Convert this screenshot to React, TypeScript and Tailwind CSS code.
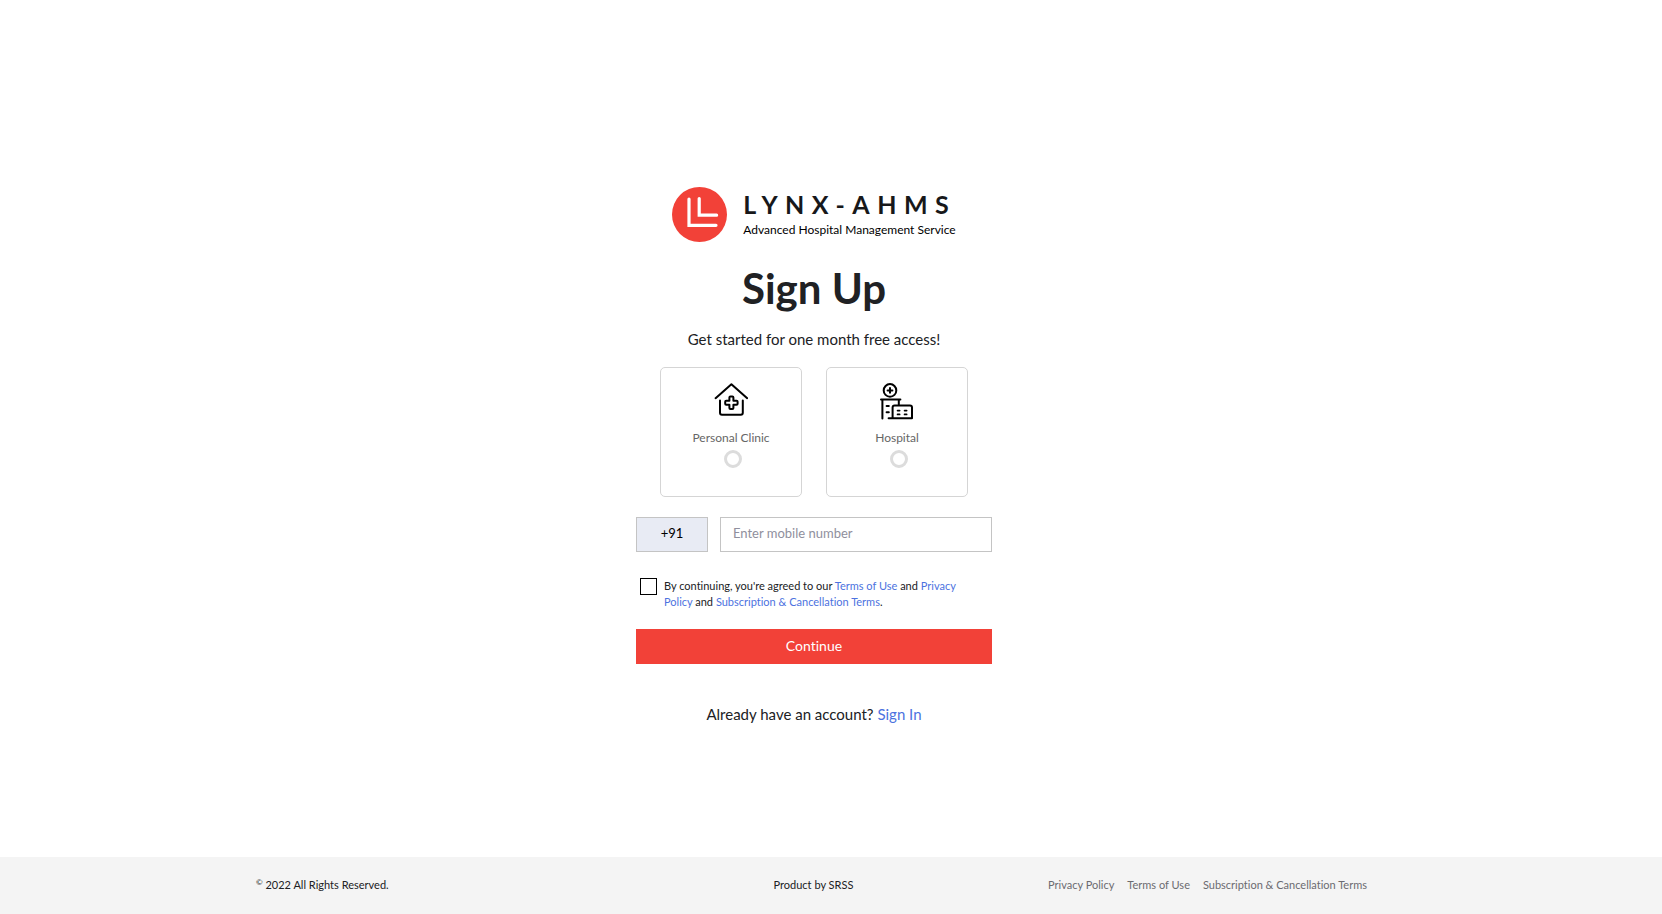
import { useState } from "react";
import type { ReactNode } from "react";

interface AccountTypeCardProps {
  value: string;
  label: string;
  selected: boolean;
  onSelect: (value: string) => void;
  children: ReactNode;
}

function Logo() {
  return (
    <div className="flex items-center gap-4">
      <svg className="w-[55px] h-[55px]" viewBox="0 0 55 55" fill="none" aria-hidden="true">
        <circle cx="27.5" cy="27.5" r="27.5" fill="#f24138" />
        <g stroke="#fff" strokeWidth="3.2" strokeLinecap="round" strokeLinejoin="miter">
          <path d="M17 12v26.3h27" />
          <path d="M27.2 11.6v16.6h17.4" />
        </g>
      </svg>
      <div className="flex flex-col pb-0.5">
        <span className="text-[25px] leading-8 font-bold tracking-[0.3em] -mr-2 text-[#17181a]">LYNX-AHMS</span>
        <span className="text-xs leading-5 text-black">Advanced Hospital Management Service</span>
      </div>
    </div>
  );
}

function ClinicIcon() {
  return (
    <svg
      className="w-[34px] h-[38px]"
      viewBox="0 0 34 38"
      fill="none"
      stroke="#000"
      strokeWidth="2"
      strokeLinecap="round"
      strokeLinejoin="round"
      aria-hidden="true"
    >
      <path d="M1.6 15.2 17.4 1.2l15.8 14" />
      <path d="M6 17.6v12.2a2 2 0 0 0 2 2h18.8a2 2 0 0 0 2-2V17.6" />
      <path d="M16.4 13.6h2a1 1 0 0 1 1 1v3.2h3.2a1 1 0 0 1 1 1v2a1 1 0 0 1-1 1h-3.2v3.2a1 1 0 0 1-1 1h-2a1 1 0 0 1-1-1v-3.2h-3.2a1 1 0 0 1-1-1v-2a1 1 0 0 1 1-1h3.2v-3.2a1 1 0 0 1 1-1z" />
    </svg>
  );
}

function HospitalIcon() {
  return (
    <svg
      className="w-[34px] h-[38px]"
      viewBox="0 0 34 38"
      fill="none"
      stroke="#000"
      strokeWidth="2"
      strokeLinecap="round"
      strokeLinejoin="round"
      aria-hidden="true"
    >
      <circle cx="10" cy="7.4" r="6.3" />
      <path d="M10 5v4.8M7.6 7.4h4.8" />
      <path d="M1 16.6h19.4M2.4 17v18.6M18.8 17v4.6" />
      <path d="M6.6 22.9h2.2M6.6 29.2h2.2" />
      <path d="M12.6 35V24.6a2 2 0 0 1 2-2H30a2 2 0 0 1 2 2v10.6H8.6" />
      <path d="M17.6 27.6h2M24.6 27.6h2M17.6 31.4h2M24.6 31.4h2" strokeWidth="1.8" />
    </svg>
  );
}

function AccountTypeCard({ value, label, selected, onSelect, children }: AccountTypeCardProps) {
  return (
    <label className="flex w-[142px] h-[130px] flex-col items-center rounded-[5px] border border-[#d5d5d5] pt-[15px] cursor-pointer">
      {children}
      <span className="mt-2 text-xs leading-[18px] text-[#666]">{label}</span>
      <input
        type="radio"
        name="accountType"
        value={value}
        checked={selected}
        onChange={() => onSelect(value)}
        className="ml-1 mt-[3px] size-[18px] appearance-none rounded-full border-3 border-[#dcdcdc] bg-white checked:border-[#f24138]"
      />
    </label>
  );
}

export default function App() {
  const [accountType, setAccountType] = useState("");
  const [mobile, setMobile] = useState("");
  const [agreed, setAgreed] = useState(false);

  return (
    <div className="flex min-h-screen flex-col bg-white font-[Lato,sans-serif] text-[#202124] [font-variant-ligatures:none]">
      <main className="flex flex-1 flex-col items-center pt-[187px] pr-[34px]">
        <Logo />

        <h1 className="mt-5 text-[42px] leading-[52px] font-bold">Sign Up</h1>
        <p className="mt-[15px] text-[15px] leading-5">Get started for one month free access!</p>

        <form className="mt-[18px] w-[356px] max-w-full" onSubmit={(e) => e.preventDefault()}>
          {/* Account type */}
          <div className="flex justify-center gap-6">
            <AccountTypeCard
              value="clinic"
              label="Personal Clinic"
              selected={accountType === "clinic"}
              onSelect={setAccountType}
            >
              <ClinicIcon />
            </AccountTypeCard>
            <AccountTypeCard
              value="hospital"
              label="Hospital"
              selected={accountType === "hospital"}
              onSelect={setAccountType}
            >
              <HospitalIcon />
            </AccountTypeCard>
          </div>

          {/* Mobile number */}
          <div className="mt-5 flex gap-3">
            <input
              type="text"
              aria-label="Country code"
              value="+91"
              readOnly
              className="h-[35px] w-[72px] border border-[#c4c4c4] bg-[#e8ebf4] pb-1 text-center text-[13px] text-black"
            />
            <input
              type="tel"
              aria-label="Mobile number"
              placeholder="Enter mobile number"
              value={mobile}
              onChange={(e) => setMobile(e.target.value)}
              className="h-[35px] min-w-0 flex-1 border border-[#c4c4c4] px-3 pb-1 text-[13px] placeholder:text-[#8f8f9d]"
            />
          </div>

          {/* Terms */}
          <div className="mt-6 flex items-start gap-[7px] pl-1">
            <input
              id="terms"
              type="checkbox"
              checked={agreed}
              onChange={(e) => setAgreed(e.target.checked)}
              className="mt-0.5 size-[17px] shrink-0 appearance-none border border-black bg-white checked:bg-[#f24138]"
            />
            <label htmlFor="terms" className="mt-0.5 pr-4 text-[11px] leading-4">
              By continuing, you're agreed to our{" "}
              <a href="#terms" className="text-[#4c72e0]">Terms of Use</a> and{" "}
              <a href="#privacy" className="text-[#4c72e0]">Privacy Policy</a> and{" "}
              <a href="#subscription" className="text-[#4c72e0]">Subscription &amp; Cancellation Terms</a>.
            </label>
          </div>

          <button type="submit" className="mt-[19px] h-[35px] w-full bg-[#f24138] pb-0.5 text-sm text-white cursor-pointer">
            Continue
          </button>
        </form>

        <p className="mt-10 text-[15px] leading-5">
          Already have an account? <a href="#signin" className="text-[#4c72e0]">Sign In</a>
        </p>
      </main>

      <footer className="bg-[#f4f4f4] pr-[39px]">
        <div className="mx-auto grid h-[57px] max-w-[1111px] grid-cols-3 items-center text-[11px]">
          <p><sup className="text-[8px]">©</sup> 2022 All Rights Reserved.</p>
          <p className="pl-1 text-center">Product by SRSS</p>
          <nav className="flex justify-end gap-[13px] whitespace-nowrap text-[#6b6b70]">
            <a href="#privacy">Privacy Policy</a>
            <a href="#terms">Terms of Use</a>
            <a href="#subscription">Subscription &amp; Cancellation Terms</a>
          </nav>
        </div>
      </footer>
    </div>
  );
}
